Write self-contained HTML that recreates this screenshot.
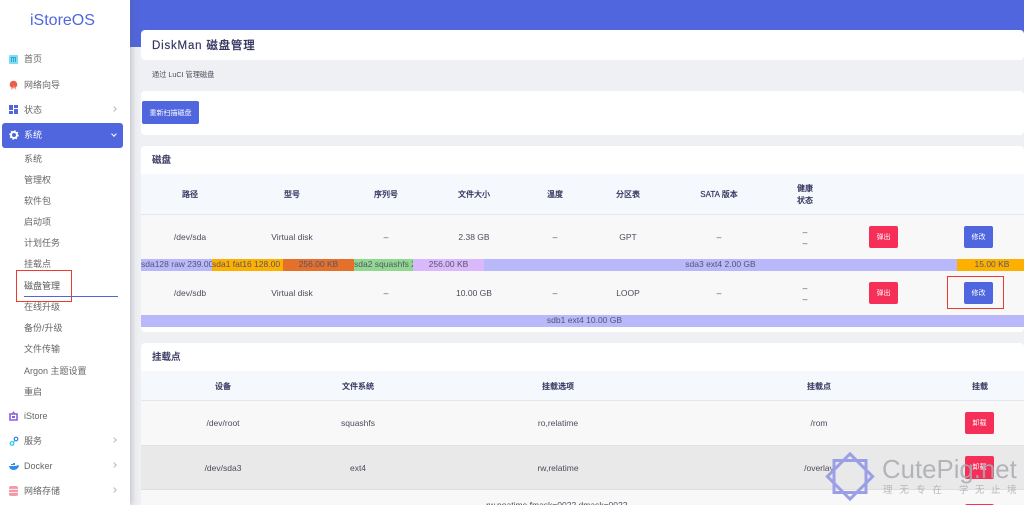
<!DOCTYPE html>
<html lang="zh"><head><meta charset="utf-8"><title>DiskMan</title>
<style>
html,body{margin:0;padding:0;width:1024px;height:505px;overflow:hidden;background:#eef0f4;font-family:"Liberation Sans","Noto Sans CJK SC",sans-serif}
div,span,svg{position:absolute;box-sizing:border-box}
#root{left:0;top:0;width:1024px;height:505px;overflow:hidden;background:#eef0f4}
.t{white-space:nowrap;line-height:12px;height:12px;font-size:8.5px;color:#4c4c5c;margin-top:1px}
.c{transform:translateX(-50%)}
.h{font-weight:500;color:#32325d;font-size:8px;-webkit-text-stroke:.15px #32325d}
.s{font-size:9px;left:24px;color:#666;margin-top:.4px}
.card{background:#fff;border-radius:4px;left:141px;width:883px}
.b{color:#fff;text-align:center;font-size:7px;line-height:24px;height:22px;width:29px;border-radius:2px;overflow:hidden}
.blue{background:#5066de}.red{background:#f52f58}
.seg{top:0;height:11.5px;line-height:11.5px;font-size:8.5px;color:#55556e;white-space:nowrap;overflow:hidden;text-align:center}
.ar{left:112px;width:4px;height:4px;border-top:1px solid #bbb;border-right:1px solid #bbb;transform:rotate(45deg)}
</style></head><body>
<div id="root">
<div style="left:130px;top:0;width:894px;height:47px;background:#5066de"></div>
<div style="left:0;top:0;width:130px;height:505px;background:#fff;box-shadow:2px 0 6px rgba(90,90,110,.3)"></div>

<div class="t" style="left:30px;top:11px;height:18px;line-height:18px;font-size:16px;color:#5066de">iStoreOS</div>
<svg style="left:9px;top:55px" width="10" height="10"><rect width="9" height="9" rx="1" fill="#7fdcf3"/><path d="M2.5 7V2.5h4V7M4.5 3v4" stroke="#2ca7d8" fill="none"/></svg>
<div class="t s" style="top:53px">首页</div>
<svg style="left:9px;top:80px" width="10" height="11"><circle cx="4.5" cy="4.5" r="3.8" fill="#ee5c4d"/><path d="M2 9.5l3-3 2 3" stroke="#ef9d92" fill="none"/></svg>
<div class="t s" style="top:79px">网络向导</div>
<svg style="left:9px;top:105px" width="10" height="10"><path d="M0 0h4v5H0zM5 0h4v3H5zM0 6h4v3H0zM5 4h4v5H5z" fill="#5066de"/></svg>
<div class="t s" style="top:104px">状态</div><div class="ar" style="top:107px"></div>
<div style="left:2px;top:123px;width:121px;height:24.5px;background:#5066de;border-radius:3px"></div>
<svg style="left:9px;top:130px" width="10" height="10"><circle cx="5" cy="5" r="3" fill="none" stroke="#fff" stroke-width="2"/><circle cx="5" cy="5" r="4.2" fill="none" stroke="#fff" stroke-width="1.2" stroke-dasharray="1.5 1.8"/></svg>
<div class="t s" style="top:129px;color:#fff">系统</div>
<div class="ar" style="top:132px;border-color:#fff;transform:rotate(135deg)"></div>
<div class="t s" style="top:153px">系统</div>
<div class="t s" style="top:174px">管理权</div>
<div class="t s" style="top:195px">软件包</div>
<div class="t s" style="top:216px">启动项</div>
<div class="t s" style="top:237px">计划任务</div>
<div class="t s" style="top:258px">挂载点</div>
<div class="t s" style="top:280px;color:#555">磁盘管理</div>
<div class="t s" style="top:301px">在线升级</div>
<div class="t s" style="top:322px">备份/升级</div>
<div class="t s" style="top:343px">文件传输</div>
<div class="t s" style="top:365px">Argon 主题设置</div>
<div class="t s" style="top:386px">重启</div>
<svg style="left:9px;top:411px" width="10" height="10"><path d="M1 3h7v6H1z" fill="#fff" stroke="#8a5ce0" stroke-width="1.6"/><path d="M3 3l1.500-2 1.500 2" stroke="#8a5ce0" fill="none"/><rect x="3" y="5" width="3" height="2" fill="#8a5ce0"/></svg>
<div class="t s" style="top:410px">iStore</div>
<svg style="left:9px;top:436px" width="10" height="11"><circle cx="7" cy="3" r="1.800" fill="none" stroke="#2f80ed" stroke-width="1.200"/><circle cx="3" cy="7.500" r="1.800" fill="none" stroke="#21cbe8" stroke-width="1.200"/><path d="M4.500 6l1.500-1.500" stroke="#21cbe8"/></svg>
<div class="t s" style="top:435px">服务</div><div class="ar" style="top:438px"></div>
<svg style="left:9px;top:462px" width="10" height="8"><path d="M0 4h7.500c.5-1 1-1 2.500-.5-.5 3-3 4.500-5.500 4.500S.5 6.500 0 4z" fill="#2f8fe6"/><path d="M2 3h4V1H4v1H2z" fill="#2f8fe6"/></svg>
<div class="t s" style="top:460px">Docker</div><div class="ar" style="top:463px"></div>
<svg style="left:9px;top:486px" width="10" height="11"><rect width="9" height="10" rx="2" fill="#f29aa8"/><path d="M0 3.300h9M0 6.600h9" stroke="#fff" stroke-width=".8"/></svg>
<div class="t s" style="top:485px">网络存储</div><div class="ar" style="top:488px"></div>

<div style="left:16px;top:270px;width:56px;height:32px;border:1px solid #ee3a2c"></div>
<div style="left:24px;top:296px;width:94px;height:1px;background:#5066de"></div>

<div class="card" style="top:30px;height:30px"></div>
<div class="t h" style="left:152px;top:38px;height:14px;line-height:14px;font-size:11.5px;letter-spacing:.8px">DiskMan 磁盘管理</div>
<div class="t" style="left:152px;top:68px;font-size:7.2px">通过 LuCI 管理磁盘</div>

<div class="card" style="top:91px;height:44px"></div>
<div class="b blue" style="left:142px;top:101px;width:57px;height:23px;line-height:25px;font-size:7px">重新扫描磁盘</div>

<div class="card" style="top:146px;height:186px"></div>
<div class="t h" style="left:152px;top:154px;font-size:9.5px">磁盘</div>
<div style="left:141px;top:174px;width:883px;height:40.5px;background:#f5f8fd;border-bottom:1px solid #e3e6ec"></div>
<div class="t h c" style="left:190px;top:188px">路径</div>
<div class="t h c" style="left:292px;top:188px">型号</div>
<div class="t h c" style="left:386px;top:188px">序列号</div>
<div class="t h c" style="left:474px;top:188px">文件大小</div>
<div class="t h c" style="left:555px;top:188px">温度</div>
<div class="t h c" style="left:628px;top:188px">分区表</div>
<div class="t h c" style="left:719px;top:188px">SATA 版本</div>
<div class="t h c" style="left:805px;top:182px">健康</div>
<div class="t h c" style="left:805px;top:194px">状态</div>

<div style="left:141px;top:215px;width:883px;height:44px;background:#f8f8f8"></div>
<div class="t c" style="left:190px;top:230px">/dev/sda</div>
<div class="t c" style="left:292px;top:230px">Virtual disk</div>
<div class="t c" style="left:386px;top:230px">–</div>
<div class="t c" style="left:474px;top:230px">2.38 GB</div>
<div class="t c" style="left:555px;top:230px">–</div>
<div class="t c" style="left:628px;top:230px">GPT</div>
<div class="t c" style="left:719px;top:230px">–</div>
<div class="t c" style="left:805px;top:225px">–</div>
<div class="t c" style="left:805px;top:236px">–</div>
<div class="b red" style="left:869px;top:226px">弹出</div>
<div class="b blue" style="left:964px;top:226px">修改</div>

<div style="left:141px;top:259px;width:883px;height:12px;overflow:hidden">
<div class="seg" style="left:0;width:71px;background:#b8b8fb;text-align:left">sda128 raw 239.00 KB</div>
<div class="seg" style="left:71px;width:71px;background:#fdb000;text-align:left">sda1 fat16 128.00 MB</div>
<div class="seg" style="left:142px;width:71px;background:#e4702c">256.00 KB</div>
<div class="seg" style="left:213px;width:59px;background:#90d890;text-align:left">sda2 squashfs 2.38 MB</div>
<div class="seg" style="left:272px;width:71px;background:#d9b8fb">256.00 KB</div>
<div class="seg" style="left:343px;width:473px;background:#b8b8fb">sda3 ext4 2.00 GB</div>
<div class="seg" style="left:816px;width:67px;background:#fdb000;padding-left:3px">15.00 KB</div>
</div>

<div style="left:141px;top:271px;width:883px;height:44px;background:#f8f8f8"></div>
<div class="t c" style="left:190px;top:286px">/dev/sdb</div>
<div class="t c" style="left:292px;top:286px">Virtual disk</div>
<div class="t c" style="left:386px;top:286px">–</div>
<div class="t c" style="left:474px;top:286px">10.00 GB</div>
<div class="t c" style="left:555px;top:286px">–</div>
<div class="t c" style="left:628px;top:286px">LOOP</div>
<div class="t c" style="left:719px;top:286px">–</div>
<div class="t c" style="left:805px;top:281px">–</div>
<div class="t c" style="left:805px;top:292px">–</div>
<div class="b red" style="left:869px;top:282px">弹出</div>
<div class="b blue" style="left:964px;top:282px">修改</div>
<div style="left:947px;top:276px;width:57px;height:33px;border:1px solid #ee3a2c"></div>
<div class="seg" style="left:141px;top:315px;width:883px;background:#b8b8fb;padding-left:4px">sdb1 ext4 10.00 GB</div>

<div class="card" style="top:343px;height:162px"></div>
<div class="t h" style="left:152px;top:351px;font-size:9.5px">挂载点</div>
<div style="left:141px;top:371px;width:883px;height:30px;background:#f5f8fd;border-bottom:1px solid #e3e6ec"></div>
<div class="t h c" style="left:223px;top:380px">设备</div>
<div class="t h c" style="left:358px;top:380px">文件系统</div>
<div class="t h c" style="left:558px;top:380px">挂载选项</div>
<div class="t h c" style="left:819px;top:380px">挂载点</div>
<div class="t h c" style="left:980px;top:380px">挂载</div>

<div style="left:141px;top:401px;width:883px;height:44.5px;background:#f8f8f8;border-bottom:1px solid #e3e3e3"></div>
<div class="t c" style="left:223px;top:416px">/dev/root</div>
<div class="t c" style="left:358px;top:416px">squashfs</div>
<div class="t c" style="left:558px;top:416px">ro,relatime</div>
<div class="t c" style="left:819px;top:416px">/rom</div>
<div class="b red" style="left:965px;top:412px">卸载</div>

<div style="left:141px;top:445.5px;width:883px;height:44.5px;background:#e9e9e9;border-bottom:1px solid #dedede"></div>
<div class="t c" style="left:223px;top:461px">/dev/sda3</div>
<div class="t c" style="left:358px;top:461px">ext4</div>
<div class="t c" style="left:558px;top:461px">rw,relatime</div>
<div class="t c" style="left:819px;top:461px">/overlay</div>
<div class="b red" style="left:965px;top:456px;height:23px">卸载</div>

<div style="left:141px;top:490px;width:883px;height:15px;background:#f8f8f8"></div>
<div class="t c" style="left:558px;top:498px">rw,noatime,fmask=0022,dmask=0022,</div>
<div class="b red" style="left:965px;top:504px">卸载</div>

<svg style="left:825px;top:451px" width="50" height="51"><g fill="none" stroke="#9a9fe6" stroke-width="3"><rect x="9" y="9.500" width="32" height="32"/><rect x="9" y="9.500" width="32" height="32" transform="rotate(45 25 25.500)"/></g></svg>
<div class="t" style="left:882px;top:455px;height:28px;line-height:28px;font-size:25.8px;color:#a9abb1;opacity:.85">CutePig.net</div>
<div class="t" style="left:883px;top:484px;font-size:9.5px;color:#b5b7bc;letter-spacing:7px">理无专在</div>
<div class="t" style="left:959px;top:484px;font-size:9.5px;color:#b5b7bc;letter-spacing:6.5px">学无止境</div>
</div>
</body></html>
